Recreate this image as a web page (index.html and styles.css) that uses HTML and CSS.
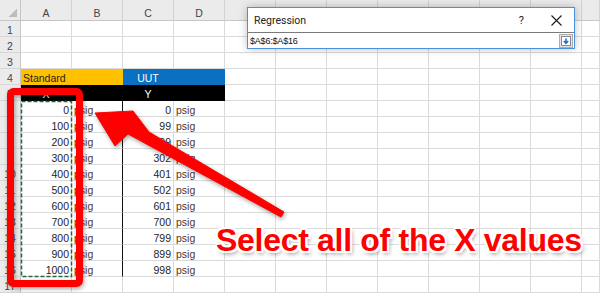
FILE: index.html
```html
<!DOCTYPE html>
<html lang="en">
<head>
    <meta charset="UTF-8" />
    <title>Regression - select X values</title>
    <link rel="stylesheet" href="styles.css">
</head>
<body>

<div id="sheet" class="sheet"></div>

<!-- Okno dialogu Regression -->
<div class="dialog">
    <div class="dialog-title">
        <span class="dialog-name">Regression</span>
        <span class="dialog-help">?</span>
        <svg class="dialog-close" width="11" height="11" viewBox="0 0 11 11">
            <path d="M0.5 0.5L10.5 10.5M10.5 0.5L0.5 10.5" stroke="#1a1a1a" stroke-width="1.1" fill="none"/>
        </svg>
    </div>
    <div class="dialog-input">
        <span class="dialog-range">$A$6:$A$16</span>
        <span class="collapse-btn">
            <svg width="10" height="10" viewBox="0 0 10 10">
                <rect x="0.5" y="0.5" width="9" height="9" fill="#fff" stroke="#8a8a8a"/>
                <path d="M5 2.5V7M2.8 5L5 7.3L7.2 5" stroke="#1e6fd0" stroke-width="1.6" fill="none"/>
            </svg>
        </span>
    </div>
</div>

<!-- Zaznaczenie i adnotacje -->
<svg class="marks" width="600" height="294" viewBox="0 0 600 294">
    <rect class="marquee" x="21.5" y="101.5" width="50" height="175"/>
    <g class="callout">
        <rect x="10.5" y="91.5" width="69" height="192" rx="3"/>
        <polygon points="95,113 133,111 149,132 284,212 281,217 128,134 115,146"/>
    </g>
</svg>

<div class="callout-text">Select all of the X values</div>

<script src="script.js"></script>

</body>
</html>
```

FILE: styles.css
```css
body {
    margin: 0;
    width: 600px;
    height: 294px;
    overflow: hidden;
    position: relative;
    background-color: #fff;
    font-family: "Liberation Sans", Arial, sans-serif;
}

.sheet {
    display: grid;
    grid-template-columns: 21px repeat(11, 51px) 18px;
    grid-template-rows: 21px;
    grid-auto-rows: 16px;
    width: 600px;
    height: 294px;
    overflow: hidden;
}

.cell {
    box-sizing: border-box;
    border-right: 1px solid #dadada;
    border-bottom: 1px solid #dadada;
    padding: 3px 2px 0;
    font-size: 10.5px;
    line-height: 12px;
    color: #1e1e1e;
    white-space: nowrap;
    overflow: hidden;
}

.corner {
    background: linear-gradient(to bottom right, transparent 50%, #bdbdbd 50%) right 3px bottom 3px / 8px 8px no-repeat, #ebebeb;
    border-right-color: #c6c6c6;
    border-bottom-color: #c6c6c6;
}

.colhead {
    background-color: #ebebeb;
    border-right-color: #d2d2d2;
    border-bottom-color: #c6c6c6;
    line-height: 20px;
    padding-top: 3px;
    text-align: center;
    color: #444;
}

.rowhead {
    background-color: #ebebeb;
    border-right-color: #c6c6c6;
    border-bottom-color: #d6d6d6;
    text-align: center;
    color: #444;
    padding: 3px 0 0;
}

.num {
    text-align: right;
}

.center {
    text-align: center;
}

.unit {
    color: #4f351c;
}

.split {
    border-right-color: #111;
}

.std {
    background-color: #ffc000;
    border-color: #ffc000;
}

.uut {
    background-color: #0a70c2;
    border-color: #0a70c2;
    color: #fff;
}

.dark {
    background-color: #000;
    border-color: #000;
    color: #fff;
}

/* Dialog Regression */
.dialog {
    position: absolute;
    left: 247px;
    top: 7px;
    width: 328px;
    height: 42px;
    box-sizing: border-box;
    border: 1px solid #4a90dc;
    background-color: #fff;
    box-shadow: 0 0 8px rgba(0,0,0,0.25);
    display: flex;
    flex-direction: column;
    font-family: Roboto, "Liberation Sans", sans-serif;
}

.dialog-title {
    height: 24px;
    display: flex;
    align-items: center;
    padding: 0 12px 0 6px;
    font-size: 10.5px;
    color: #222;
}

.dialog-name {
    flex: 1;
}

.dialog-help {
    font-size: 11px;
    margin-right: 27px;
}

.dialog-input {
    flex: 1;
    display: flex;
    align-items: center;
    border-top: 1px solid #7a7a7a;
    padding: 0 1px 0 2px;
}

.dialog-range {
    flex: 1;
    font-family: "Liberation Sans", Arial, sans-serif;
    font-size: 9px;
    color: #111;
    letter-spacing: -0.2px;
}

.collapse-btn {
    width: 14px;
    height: 14px;
    box-sizing: border-box;
    border: 1px solid #adadad;
    background-color: #e3e3e3;
    display: flex;
    align-items: center;
    justify-content: center;
}

/* Adnotacje na arkuszu */
.marks {
    position: absolute;
    left: 0;
    top: 0;
    pointer-events: none;
}

.marquee {
    fill: none;
    stroke: #1d6b3e;
    stroke-width: 1.5;
    stroke-dasharray: 4 2;
}

.callout {
    filter: drop-shadow(1px 2px 2px rgba(0,0,0,0.35));
}

.callout rect {
    fill: none;
    stroke: #ff0000;
    stroke-width: 7;
}

.callout polygon {
    fill: #ff0000;
    stroke: #ff0000;
    stroke-width: 1;
    stroke-linejoin: round;
}

.callout-text {
    position: absolute;
    left: 216px;
    top: 224px;
    font-size: 32px;
    line-height: 32px;
    font-weight: bold;
    letter-spacing: -0.3px;
    color: #ff0000;
    white-space: nowrap;
    text-shadow: -2px -2px 0 #fff, 2px -2px 0 #fff, -2px 2px 0 #fff, 2px 2px 0 #fff,
                 0 -2px 0 #fff, 0 2px 0 #fff, -2px 0 0 #fff, 2px 0 0 #fff,
                 2px 3px 4px rgba(0,0,0,0.45);
}
```

FILE: script.js
```js
const sheet = document.getElementById('sheet');
// litery E i dalej sa pod oknem dialogu
const letters = ['A', 'B', 'C', 'D', '', '', '', '', '', '', '', ''];
const standard = [0, 100, 200, 300, 400, 500, 600, 700, 800, 900, 1000];
const uut = [0, 99, 199, 302, 401, 502, 601, 700, 799, 899, 998];

function addCell(text, cls) {
    const cell = document.createElement('div');
    cell.className = 'cell ' + cls;
    cell.textContent = text;
    sheet.appendChild(cell);
}

addCell('', 'corner');
letters.forEach(l => addCell(l, 'colhead'));

for (let r = 1; r <= 17; r++) {
    addCell(r, 'rowhead');
    for (let c = 0; c < letters.length; c++) {
        let text = '';
        let cls = '';

        if (r === 4 && c < 2) {
            cls = 'std';
            text = c === 0 ? 'Standard' : '';
        } else if (r === 4 && c < 4) {
            cls = 'uut center';
            text = c === 2 ? 'UUT' : '';
        } else if (r === 5 && c < 4) {
            cls = 'dark center';
            text = c === 0 ? 'X' : (c === 2 ? 'Y' : '');
        } else if (r >= 6 && r <= 16 && c < 4) {
            const i = r - 6;
            if (c === 0) { text = standard[i]; cls = 'num'; }
            if (c === 1) { text = 'psig'; cls = 'unit split'; }
            if (c === 2) { text = uut[i]; cls = 'num'; }
            if (c === 3) { text = 'psig'; cls = 'unit'; }
        }

        addCell(text, cls);
    }
}
```
